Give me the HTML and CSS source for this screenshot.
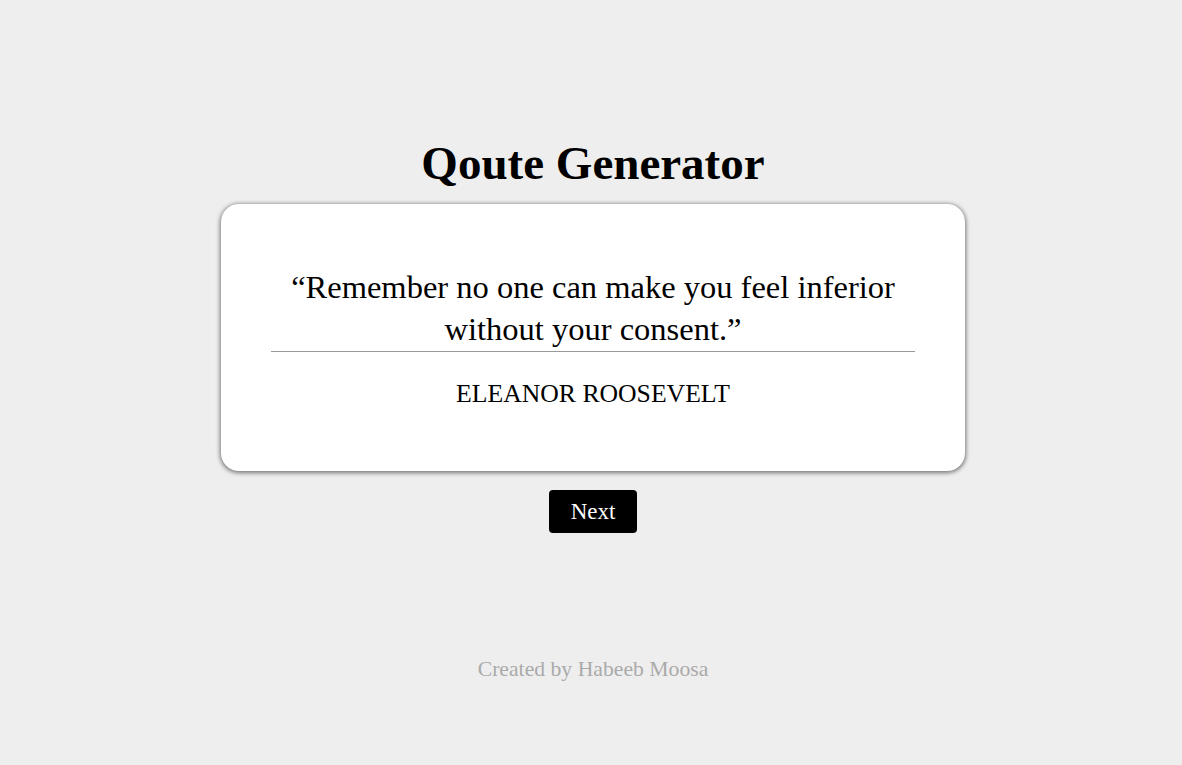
FILE: index.html
```html
<!DOCTYPE html>
<html>
<head>
<meta charset="utf-8">
<link rel="stylesheet" href="styles.css">
</head>
<body>
<main class="page">
  <h1 class="title">Qoute Generator</h1>
  <section class="card">
    <p class="quote">“Remember no one can make you feel inferior without your consent.”</p>
    <hr class="rule">
    <p class="author">ELEANOR ROOSEVELT</p>
  </section>
  <button class="next">Next</button>
  <footer class="credit">Created by Habeeb Moosa</footer>
</main>
</body>
</html>
```
FILE: styles.css
```css
html, body {
  margin: 0;
  padding: 0;
  background: #eeeeee;
}
body {
  font-family: "Liberation Serif", "Times New Roman", serif;
  color: #000;
}
.page {
  display: flex;
  flex-direction: column;
  align-items: center;
  padding-top: 138px;
  padding-left: 4px;
}
.title {
  margin: 0;
  font-size: 47px;
  font-weight: bold;
  line-height: 50px;
}
.card {
  box-sizing: border-box;
  width: 744px;
  height: 267px;
  margin-top: 16px;
  background: #fff;
  border-radius: 18px;
  box-shadow: 0 1px 4px 1px #777;
  padding: 62px 50px 0;
  text-align: center;
}
.quote {
  margin: 0;
  font-size: 32.5px;
  line-height: 42px;
}
.rule {
  margin: 1px 0 0;
  border: 0;
  border-top: 1px solid #999;
  height: 0;
}
.author {
  margin: 27px 0 0;
  font-size: 25.7px;
  line-height: 30px;
}
.next {
  margin-top: 19px;
  width: 88px;
  height: 43px;
  background: #000;
  color: #fff;
  border: 0;
  border-radius: 4px;
  font-family: "Liberation Serif", "Times New Roman", serif;
  font-size: 23px;
  padding: 0;
}
.credit {
  margin-top: 124px;
  font-size: 21.7px;
  color: #aaaaaa;
}
```
